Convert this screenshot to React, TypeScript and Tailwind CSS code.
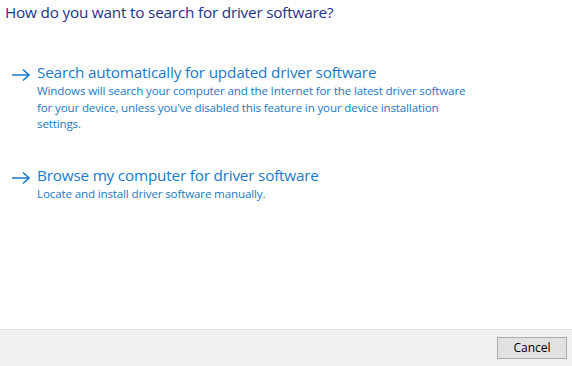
export default function App() {
  const options = [
    {
      title: "Search automatically for updated driver software",
      desc: "Windows will search your computer and the Internet for the latest driver software for your device, unless you've disabled this feature in your device installation settings.",
    },
    {
      title: "Browse my computer for driver software",
      desc: "Locate and install driver software manually.",
    },
  ];

  return (
    <div
      className="w-[572px] h-[366px] flex flex-col bg-white overflow-hidden"
      style={{ fontFamily: '"Open Sans", "Noto Sans", sans-serif' }}
    >
      <div className="flex-1 flex flex-col">
        <h1 className="text-[15.3px] leading-5 text-[#1e3287] pl-[5px] pt-[2px] tracking-[-0.2px]">
          How do you want to search for driver software?
        </h1>

        <div className="mt-[41px] flex flex-col gap-[33px]">
          {options.map((o, i) => (
            <div key={i} className="flex pl-[11px]">
              <svg
                width="20"
                height="14"
                viewBox="0 0 20 14"
                className="mt-[5px] mr-[6px] flex-shrink-0"
                fill="none"
                stroke="#1979ca"
                strokeWidth="1.6"
              >
                <path d="M1 7h17M12 1.5l6 5.5-6 5.5" />
              </svg>
              <div className="w-[432px]">
                <div className="text-[15.3px] leading-[19px] text-[#1979ca] tracking-[-0.2px] whitespace-nowrap">
                  {o.title}
                </div>
                <div className="text-[11.6px] leading-[16.5px] text-[#1979ca] tracking-[-0.15px] pt-[1px]">
                  {o.desc}
                </div>
              </div>
            </div>
          ))}
        </div>
      </div>

      <div className="h-[37px] bg-[#f0f0f0] border-t border-[#dfdfdf] flex items-center justify-end pr-[5px]">
        <button className="w-[70px] h-[22px] bg-[#e1e1e1] border border-[#adadad] text-[12px] text-black">
          Cancel
        </button>
      </div>
    </div>
  );
}
